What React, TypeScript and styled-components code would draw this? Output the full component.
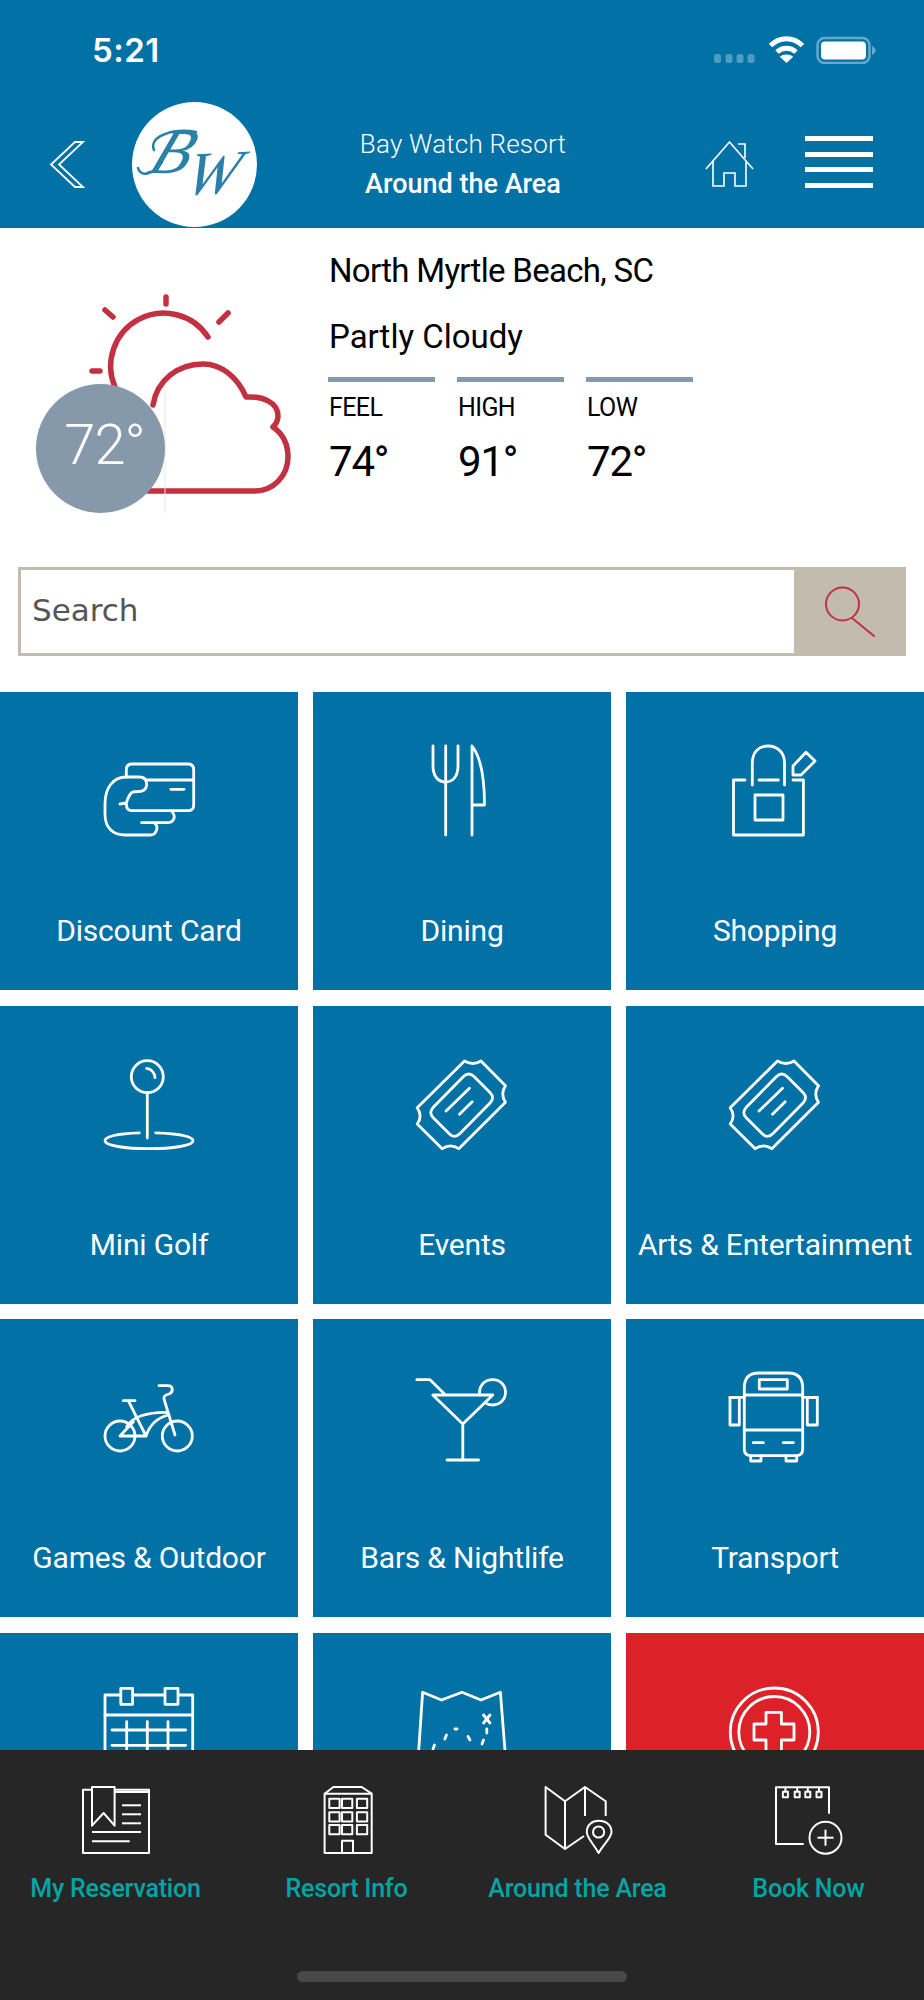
import styled, { createGlobalStyle } from "styled-components";
import type { ReactNode } from "react";

const BLUE = "#0271a6";
const RED = "#c1313f";
const FONT = `Roboto, "Open Sans", sans-serif`;

const GlobalStyle = createGlobalStyle`
  html, body {
    margin: 0;
    padding: 0;
    background: #fff;
  }
  * {
    box-sizing: border-box;
  }
`;

const Screen = styled.div`
  position: relative;
  width: 924px;
  height: 2000px;
  overflow: hidden;
  background: #fff;
  font-family: ${FONT};
`;

const Header = styled.header`
  background: ${BLUE};
  height: 228px;
  color: #fff;
`;

const StatusBar = styled.div`
  display: flex;
  align-items: center;
  justify-content: space-between;
  height: 100px;
  padding: 0 48px 0 92px;
`;

const Clock = styled.span`
  font-family: Inter, sans-serif;
  font-size: 33px;
  font-weight: 600;
  letter-spacing: 0.5px;
`;

const NavBar = styled.nav`
  display: flex;
  align-items: center;
  height: 128px;
  padding: 0 51px 0 50px;
`;

const LogoDisc = styled.div`
  width: 125px;
  height: 125px;
  margin-left: 47px;
  border-radius: 50%;
  background: #fff;
  flex: none;
`;

const NavTitle = styled.div`
  flex: 1;
  padding-right: 36px;
  text-align: center;
`;

const ResortName = styled.div`
  font-size: 26px;
  font-weight: 300;
  letter-spacing: 0.2px;
  line-height: 36px;
`;

const PageName = styled.div`
  font-size: 27px;
  font-weight: 500;
  line-height: 38px;
  margin-top: 3px;
`;

const MenuButton = styled.div`
  display: flex;
  flex-direction: column;
  gap: 10.5px;
  width: 68px;
  margin: 0 0 4px 51px;
`;

const MenuBar = styled.span`
  display: block;
  height: 5px;
  background: #fff;
`;

const Weather = styled.section`
  display: flex;
  height: 339px;
`;

const WeatherArt = styled.div`
  position: relative;
  width: 328px;
  flex: none;
`;

const TempBadge = styled.div`
  position: absolute;
  left: 36px;
  top: 156px;
  display: flex;
  align-items: center;
  justify-content: center;
  width: 129px;
  height: 129px;
  padding: 0 0 8px 8px;
  border-radius: 50%;
  background: #8699aa;
  color: #fff;
  font-size: 56px;
  font-weight: 300;
  letter-spacing: -1px;
`;

const WeatherInfo = styled.div`
  flex: 1;
  padding-top: 22.5px;
  color: #000;
`;

const InfoLine = styled.div<{ $tracking: number }>`
  font-size: 33px;
  line-height: 40px;
  letter-spacing: ${(p) => p.$tracking}px;
  margin: 0 0 26px 1px;
`;

const Readings = styled.div`
  display: flex;
  gap: 22px;
  margin-top: -5.5px;
`;

const Reading = styled.div`
  width: 107px;
  border-top: 5px solid #8699aa;
  padding: 10.5px 0 0 1px;
`;

const ReadingLabel = styled.div`
  font-size: 25px;
  letter-spacing: -0.6px;
  line-height: 30px;
`;

const ReadingValue = styled.div`
  font-size: 42px;
  letter-spacing: -1.2px;
  line-height: 50px;
  margin-top: 14px;
`;

const SearchBar = styled.form`
  display: flex;
  height: 89px;
  margin: 0 18px;
  border: 3px solid #c2bbae;
  border-right: 0;
`;

const SearchInput = styled.input`
  flex: 1;
  min-width: 0;
  border: 0;
  outline: 0;
  padding: 0 0 4px 11px;
  background: #fff;
  font-family: "DejaVu Sans", sans-serif;
  font-size: 31px;
  color: #555;

  &::placeholder {
    color: #555;
    opacity: 1;
  }
`;

const SearchButton = styled.button`
  display: flex;
  align-items: center;
  justify-content: center;
  width: 112px;
  border: 0;
  padding: 0;
  background: #c2bbae;
`;

const Grid = styled.div`
  display: grid;
  grid-template-columns: repeat(3, 1fr);
  grid-auto-rows: 298px;
  column-gap: 15px;
  row-gap: 15.5px;
  margin-top: 36px;
`;

const Tile = styled.div<{ $alert?: boolean }>`
  display: flex;
  flex-direction: column;
  align-items: center;
  padding-top: 54px;
  background: ${(p) => (p.$alert ? "#dc2228" : BLUE)};
  color: #fff;
`;

const TileGlyph = styled.svg.attrs({ viewBox: "0 0 100 90" })`
  display: block;
  width: 100px;
  height: 90px;
  overflow: visible;
  fill: none;
  stroke: #fff;
  stroke-width: 2.8;
  stroke-linecap: round;
  stroke-linejoin: round;
`;

const TileLabel = styled.div`
  margin-top: 75px;
  font-size: 30px;
  letter-spacing: -0.2px;
  line-height: 40px;
  white-space: nowrap;
`;

const BottomBar = styled.footer`
  position: absolute;
  left: 0;
  right: 0;
  bottom: 0;
  height: 250px;
  background: #262626;
`;

const TabRow = styled.div`
  display: grid;
  grid-template-columns: repeat(4, 1fr);
  padding-top: 36px;
`;

const Tab = styled.div`
  display: flex;
  flex-direction: column;
  align-items: center;
`;

const TabGlyph = styled.svg.attrs({ viewBox: "0 0 70 68" })`
  display: block;
  width: 70px;
  height: 68px;
  overflow: visible;
  fill: none;
  stroke: #fff;
  stroke-width: 2;
  stroke-linejoin: round;
`;

const TabLabel = styled.div`
  margin-top: 19px;
  font-size: 25px;
  font-weight: 500;
  letter-spacing: -0.2px;
  line-height: 32px;
  color: #00a5a5;
  white-space: nowrap;
`;

const HomeIndicator = styled.div`
  position: absolute;
  left: 297px;
  bottom: 18px;
  width: 330px;
  height: 11px;
  border-radius: 6px;
  background: #484848;
`;

const StatusIcons = () => (
  <svg width="162" height="28" viewBox="0 0 162 28" style={{ display: "block" }}>
    <g fill="#fff" fillOpacity="0.3">
      <rect x="0" y="18" width="7" height="9" rx="2.5" />
      <rect x="11.5" y="18" width="7" height="9" rx="2.5" />
      <rect x="22.5" y="18" width="7" height="9" rx="2.5" />
      <rect x="33.5" y="18" width="7" height="9" rx="2.5" />
    </g>
    <g fill="none" stroke="#fff" strokeWidth="5">
      <path d="M56.5 9.5 C 66 0.5 79 0.5 88.5 9.5" />
      <path d="M63 16 C 68.5 11 76.5 11 82 16" />
    </g>
    <path d="M72.5 27 L 65.8 20.8 C 69.5 17.8 75.5 17.8 79.2 20.8 Z" fill="#fff" />
    <rect x="103.5" y="2" width="52" height="25" rx="7" fill="none" stroke="#fff" strokeOpacity="0.4" strokeWidth="2.5" />
    <rect x="107" y="5.5" width="45" height="18" rx="4" fill="#fff" />
    <path d="M158 10 C 160.500 11 161.500 13 161.500 14.500 C 161.500 16 160.500 18 158 19 Z" fill="#fff" fillOpacity="0.4" />
  </svg>
);

const BackIcon = () => (
  <svg width="35" height="47" viewBox="0 0 35 47" fill="none" stroke="#fff" strokeWidth="1.8">
    <path d="M33 1 H 25 L 1 23.500 L 25 46 H 33 L 9 23.500 Z" />
  </svg>
);

const LogoMark = () => (
  <svg width="125" height="125" viewBox="0 0 125 125">
    <g fontFamily='"Liberation Serif", serif' fontStyle="italic" fill="#2b80aa">
      <text x="0" y="0" fontSize="64" transform="translate(14 71) skewX(-22)">B</text>
      <text x="0" y="0" fontSize="62" transform="translate(50 93) skewX(-18) rotate(-3)">W</text>
    </g>
    <g fill="none" stroke="#2b80aa" strokeWidth="2.5" strokeLinecap="round">
      <path d="M6 66 C 9 76 22 72 30 60" />
      <path d="M22 48 C 16 34 42 26 64 30" />
    </g>
  </svg>
);

const HomeIcon = () => (
  <svg width="49" height="46" viewBox="0 0 49 46" fill="none" stroke="#fff" strokeWidth="1.6" style={{ flex: "none" }}>
    <path d="M1 28 L 24.500 1 L 48 28" />
    <path d="M8 20 V 45 H 19 V 32 H 30 V 45 H 41 V 20" />
    <path d="M33 3 H 40 V 17" />
  </svg>
);

const SearchIcon = () => (
  <svg width="50" height="52" viewBox="0 0 50 52" fill="none" stroke={RED} strokeWidth="2" strokeLinecap="round">
    <circle cx="17.500" cy="18" r="16.500" />
    <path d="M27 32 L 49 50" />
  </svg>
);

const WeatherDrawing = () => (
  <svg width="328" height="339" viewBox="0 228 328 339" fill="none" stroke={RED} strokeWidth="5.5" strokeLinecap="round" strokeLinejoin="round" style={{ display: "block" }}>
    <path d="M208 337 A 53 53 0 0 0 115 387" />
    <path d="M166 297 V 304" />
    <path d="M105 310 L 113 317" />
    <path d="M219 322 L 228 313" />
    <path d="M92 371 H 100" />
    <path d="M153 405 C 157 380 178 364 203 364 C 222 364 238 378 246 397 C 262 396 278 402 278 416 Q 278 422 273 427 C 283 434 288 445 288 457 C 288 476 273 491 255 491 L 148 491" />
    <path d="M165 390 V 513" stroke="#e3e6ea" strokeWidth="1" strokeLinecap="butt" />
  </svg>
);

const CardGlyph = () => (
  <TileGlyph>
    <path d="M27.300 31 V 24 Q 27.300 18 33 18 H 89 Q 94.700 18 94.700 24 V 59 Q 94.700 64.700 89 64.700 H 33 Q 27.300 64.700 27.300 58" />
    <path d="M47.700 34 H 94.700" />
    <path d="M72 43.300 H 85" />
    <path d="M21 58 L 27.300 57 C 29 52 31 46 35 45.700 C 44 46 47.700 44 47.700 38 C 47.700 33 45 31 40 31 H 27 C 14 31 6 42 6 58 V 68 C 6 82 14 89 26 89 H 51 C 58 89 60 80 55.400 77" />
    <path d="M42.600 76.700 H 68 C 75 76.700 78 70 72 64.700" />
  </TileGlyph>
);

const DiningGlyph = () => (
  <TileGlyph>
    <path d="M21 0 V 20 C 21 30 26 36 33.700 36 C 41 36 46 30 46 20 V 0" />
    <path d="M33.700 0 V 89" />
    <path d="M60 89 V 0 C 68 10 72.500 32 72.500 59 H 60" />
  </TileGlyph>
);

const ShoppingGlyph = () => (
  <TileGlyph>
    <path d="M20 34 H 8.500 V 89 H 78.400 V 34 H 68" />
    <path d="M34 34 H 53.400" />
    <path d="M27.300 39 V 17 C 27.300 6 34 0 43 0 C 52 0 59.500 6 59.500 17 V 39" />
    <rect x="30" y="49" width="28" height="25" />
    <path d="M68 29 V 20 L 81 6.300 L 90 15 L 76 29 Z" />
  </TileGlyph>
);

const GolfGlyph = () => (
  <TileGlyph>
    <circle cx="48.300" cy="16.700" r="16" />
    <path d="M47.700 8.300 C 52 8.800 55.500 12.500 56 17.700" />
    <path d="M48.300 32.700 V 78" />
    <path d="M56.700 72.800 C 80 73.500 94 76.500 94 80.700 C 94 85.500 74 88.700 50 88.700 C 26 88.700 6 85.500 6 80.700 C 6 76.500 18 73.500 40.300 72.800" />
  </TileGlyph>
);

const TicketGlyph = () => (
  <TileGlyph>
    <path d="M52.500 1 Q 61 6 69 1 L 93.500 25.700 Q 88 34 93.500 42.300 L 46.800 88.700 Q 38.500 83 30.200 88.700 L 5.200 64 Q 11 56 5.200 47.700 Z" />
    <path d="M51.500 16.500 Q 56.800 11.500 62 16.500 L 78 32.500 Q 83 37.700 78 43 L 48 73.500 Q 42.500 79 37.500 74 L 21.500 58 Q 16 52.700 21.500 47 Z" />
    <path d="M34 51 L 57.500 28.300" />
    <path d="M47.500 54.300 L 60.200 41.700" />
  </TileGlyph>
);

const BikeGlyph = () => (
  <TileGlyph>
    <circle cx="21" cy="63" r="15" />
    <circle cx="78.300" cy="63" r="15" />
    <path d="M24.300 27.700 H 36" />
    <path d="M29.300 27.700 L 47 63 H 21 L 34.300 48.700" />
    <path d="M27.700 53.700 C 33 44 48 39 67.700 39.300" />
    <path d="M47 63 C 50 54 57 45 69.300 42" />
    <path d="M60 12.700 H 69 C 74 12.700 75 19 70 21 C 66 22 64.500 23 65 26 L 76 62" />
  </TileGlyph>
);

const CocktailGlyph = () => (
  <TileGlyph>
    <path d="M4.800 6.700 H 18 L 32.500 21" />
    <path d="M20.800 22 H 80.800 L 50.800 51 Z" />
    <path d="M50.800 51 V 87" />
    <path d="M35 87 H 66.500" />
    <path d="M67.500 20 C 67.500 12 73 6.700 80.800 6.700 C 88 6.700 93.500 12 93.500 19.300 C 93.500 26.500 88 32 80.800 32 C 78 32 75.500 31.500 73.500 30" />
  </TileGlyph>
);

const BusGlyph = () => (
  <TileGlyph>
    <path d="M34 0 H 63 Q 77.700 0 77.700 15 V 76 Q 77.700 82.700 71 82.700 H 26 Q 19.300 82.700 19.300 76 V 15 Q 19.300 0 34 0 Z" />
    <rect x="34.300" y="6.700" width="28" height="9.300" />
    <path d="M19.300 22 H 77.700" />
    <path d="M19.300 57 H 77.700" />
    <path d="M28.300 69.700 H 38.300" />
    <path d="M58.300 69.700 H 68.300" />
    <rect x="5" y="24.300" width="9.300" height="27.700" />
    <rect x="82.300" y="24.300" width="10" height="27.700" />
    <path d="M5 24.300 H 19.300" />
    <path d="M77.700 24.300 H 92.300" />
    <path d="M25.700 82.700 V 88 H 36 V 82.700" />
    <path d="M61 82.700 V 88 H 71.700 V 82.700" />
  </TileGlyph>
);

const CalendarGlyph = () => (
  <TileGlyph>
    <path d="M6 8 H 93.700 V 89 H 6 Z" />
    <path d="M6 28 H 93.700" />
    <rect x="21.800" y="1.300" width="11.800" height="16" fill={BLUE} />
    <rect x="66" y="1.300" width="13" height="16" fill={BLUE} />
    <path d="M13 43 H 86.600" />
    <path d="M13 58.300 H 86.600" />
    <path d="M13 73.600 H 86.600" />
    <path d="M27.700 34.700 V 82" />
    <path d="M48.300 34.700 V 82" />
    <path d="M69 34.700 V 82" />
  </TileGlyph>
);

const MapGlyph = () => (
  <TileGlyph>
    <path d="M10.600 5.300 L 29.500 13 L 50 5.300 L 69 13 L 88.400 5.300 L 95 89 H 5 Z" />
    <path d="M71.500 28 L 78 36" />
    <path d="M78 28 L 71.500 36" />
    <path d="M43 42 H 45" />
    <path d="M34.500 48 L 32.800 52" />
    <path d="M22.500 58 L 21 62" />
    <path d="M56 49.500 L 58 53" />
    <path d="M74.800 42 V 46" />
    <path d="M71.500 53 L 70 57" />
  </TileGlyph>
);

const MedicalGlyph = () => (
  <TileGlyph>
    <circle cx="49.300" cy="45" r="44" />
    <circle cx="49.300" cy="45" r="35.500" />
    <path d="M41 25.300 H 56.400 V 37 H 69 V 53 H 56.400 V 66 H 41 V 53 H 29 V 37 H 41 Z" />
  </TileGlyph>
);

const ReservationGlyph = () => (
  <TabGlyph>
    <path d="M11 3.700 H 2 V 67 H 68 V 3.700 H 33.600" />
    <path d="M33.600 6 H 68" />
    <path d="M11 39.700 V 1 H 33.600 V 39.700 L 22.600 27 Z" />
    <path d="M41 19.300 H 60" />
    <path d="M41 28.300 H 60" />
    <path d="M41 37.300 H 60" />
    <path d="M11 46 H 60" />
    <path d="M11 55.300 H 48.700" />
  </TabGlyph>
);

const ResortGlyph = () => (
  <TabGlyph>
    <path d="M12.600 7.700 L 21.400 1 H 49.700 L 59.700 7.700 V 67 H 12.600 Z" />
    <path d="M12.600 7.700 H 59.700" />
    {[12.7, 26.300, 39].map((y) =>
      [17.300, 30, 44.900].map((x) => <rect key={`${x}-${y}`} x={x} y={y} width="10.300" height="9.300" />)
    )}
    <path d="M30 67 V 54.700 H 41 V 67" />
  </TabGlyph>
);

const AreaGlyph = () => (
  <TabGlyph>
    <path d="M42 30 V 1 L 62.700 15.300 V 30" />
    <path d="M41 50 L 22 63 L 2.600 48.700 V 1 L 22 15.300 L 42 1" />
    <path d="M22 15.300 V 63" />
    <path d="M55.600 67 C 50 57 43.800 52 43.800 46 C 43.800 39 49 34.700 55.600 34.700 C 63 34.700 68.500 39 68.500 46 C 68.500 52 61 57 55.600 67 Z" />
    <circle cx="55.600" cy="46" r="5.600" />
  </TabGlyph>
);

const BookGlyph = () => (
  <TabGlyph>
    <path d="M55 27.700 V 1.300 H 2 V 58 H 29.700" />
    {[11.400, 23.200, 33.800, 45].map((x) => (
      <g key={x}>
        <rect x={x - 2.500} y="5.700" width="5" height="5.500" />
        <path d={`M${x} 1.300 V 5.700`} />
      </g>
    ))}
    <circle cx="51.500" cy="51.700" r="16" />
    <path d="M43.500 51.700 H 59.500" />
    <path d="M51.500 43.700 V 59.700" />
  </TabGlyph>
);

// last row runs under the bottom bar, its labels never show
const tiles: { id: string; label?: string; glyph: ReactNode; alert?: boolean }[] = [
  { id: "card", label: "Discount Card", glyph: <CardGlyph /> },
  { id: "dining", label: "Dining", glyph: <DiningGlyph /> },
  { id: "shopping", label: "Shopping", glyph: <ShoppingGlyph /> },
  { id: "golf", label: "Mini Golf", glyph: <GolfGlyph /> },
  { id: "events", label: "Events", glyph: <TicketGlyph /> },
  { id: "arts", label: "Arts & Entertainment", glyph: <TicketGlyph /> },
  { id: "games", label: "Games & Outdoor", glyph: <BikeGlyph /> },
  { id: "bars", label: "Bars & Nightlife", glyph: <CocktailGlyph /> },
  { id: "transport", label: "Transport", glyph: <BusGlyph /> },
  { id: "calendar", glyph: <CalendarGlyph /> },
  { id: "map", glyph: <MapGlyph /> },
  { id: "medical", glyph: <MedicalGlyph />, alert: true },
];

const tabs: { label: string; glyph: ReactNode }[] = [
  { label: "My Reservation", glyph: <ReservationGlyph /> },
  { label: "Resort Info", glyph: <ResortGlyph /> },
  { label: "Around the Area", glyph: <AreaGlyph /> },
  { label: "Book Now", glyph: <BookGlyph /> },
];

const readings = [
  { label: "FEEL", value: "74°" },
  { label: "HIGH", value: "91°" },
  { label: "LOW", value: "72°" },
];

const App = () => {
  return (
    <Screen>
      <GlobalStyle />
      <Header>
        <StatusBar>
          <Clock>5:21</Clock>
          <StatusIcons />
        </StatusBar>
        <NavBar>
          <BackIcon />
          <LogoDisc>
            <LogoMark />
          </LogoDisc>
          <NavTitle>
            <ResortName>Bay Watch Resort</ResortName>
            <PageName>Around the Area</PageName>
          </NavTitle>
          <HomeIcon />
          <MenuButton>
            <MenuBar />
            <MenuBar />
            <MenuBar />
            <MenuBar />
          </MenuButton>
        </NavBar>
      </Header>

      <Weather>
        <WeatherArt>
          <WeatherDrawing />
          <TempBadge>72°</TempBadge>
        </WeatherArt>
        <WeatherInfo>
          <InfoLine $tracking={-0.7}>North Myrtle Beach, SC</InfoLine>
          <InfoLine $tracking={0}>Partly Cloudy</InfoLine>
          <Readings>
            {readings.map((r) => (
              <Reading key={r.label}>
                <ReadingLabel>{r.label}</ReadingLabel>
                <ReadingValue>{r.value}</ReadingValue>
              </Reading>
            ))}
          </Readings>
        </WeatherInfo>
      </Weather>

      <SearchBar>
        <SearchInput placeholder="Search" />
        <SearchButton type="button">
          <SearchIcon />
        </SearchButton>
      </SearchBar>

      <Grid>
        {tiles.map((t) => (
          <Tile key={t.id} $alert={t.alert}>
            {t.glyph}
            {t.label && <TileLabel>{t.label}</TileLabel>}
          </Tile>
        ))}
      </Grid>

      <BottomBar>
        <TabRow>
          {tabs.map((t) => (
            <Tab key={t.label}>
              {t.glyph}
              <TabLabel>{t.label}</TabLabel>
            </Tab>
          ))}
        </TabRow>
        <HomeIndicator />
      </BottomBar>
    </Screen>
  );
};

export default App;
